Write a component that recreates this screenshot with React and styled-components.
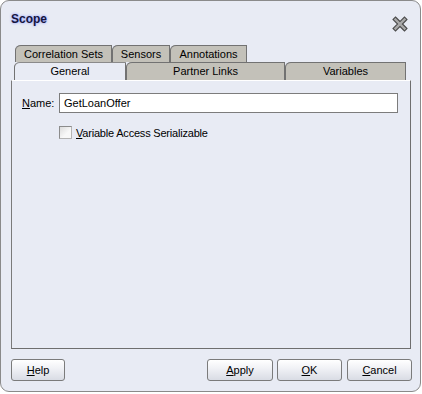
import React from 'react';
import styled, { createGlobalStyle } from 'styled-components';

const GlobalStyle = createGlobalStyle`
  body {
    margin: 0;
    background: #ffffff;
  }
`;

const Window = styled.div`
  box-sizing: border-box;
  width: 421px;
  height: 392px;
  border: 1px solid #8a8a8a;
  border-radius: 9px;
  background: #e8ebf4;
  display: flex;
  flex-direction: column;
  font: 11px 'Liberation Sans', Arial, sans-serif;
  color: #000;
`;

const TitleBar = styled.div`
  box-sizing: border-box;
  height: 44px;
  padding: 11px 12px 0 10px;
  display: flex;
  justify-content: space-between;
  align-items: flex-start;
`;

const Title = styled.div`
  font-size: 12px;
  font-weight: bold;
  line-height: 14px;
  color: #16163c;
  text-shadow: 0 0 3px #9aa6ff, 0 0 2px #b4bcff;
`;

const TabArea = styled.div`
  padding-left: 13px;
  display: flex;
  flex-direction: column;
`;

const TabRow = styled.div`
  display: flex;
  margin-left: ${p => p.$shift || 0}px;
`;

const Tab = styled.div`
  box-sizing: border-box;
  width: ${p => p.$w}px;
  height: ${p => p.$h}px;
  border: 1px solid #727272;
  border-bottom: none;
  border-top-left-radius: 6px 5px;
  background: ${p => (p.$active ? '#e8ebf4' : '#c3c1b9')};
  border-top-color: ${p => (p.$active ? '#8a8a8a' : '#727272')};
  text-align: center;
  line-height: ${p => p.$h - 1}px;
  position: relative;
  z-index: ${p => (p.$active ? 1 : 0)};
  margin-bottom: ${p => (p.$active ? -1 : 0)}px;
  white-space: nowrap;
`;

const Panel = styled.div`
  box-sizing: border-box;
  height: 269px;
  margin: 0 9px 0 10px;
  border-top: 1px solid #ffffff;
  border-left: 1px solid #7a7a7a;
  border-right: 1px solid #6e6e6e;
  border-bottom: 1px solid #6e6e6e;
  padding: 12px 12px 0 10px;
  display: flex;
  flex-direction: column;
`;

const FieldRow = styled.div`
  display: flex;
  align-items: center;
`;

const Label = styled.label`
  width: 37px;
  flex: none;
`;

const TextBox = styled.div`
  box-sizing: border-box;
  flex: 1;
  height: 20px;
  border: 1px solid #7c7c7c;
  background: #ffffff;
  padding-left: 4px;
  line-height: 18px;
`;

const CheckRow = styled.div`
  display: flex;
  align-items: center;
  margin-top: 13px;
  padding-left: 37px;
  gap: 4px;
`;

const CheckText = styled.span`
  letter-spacing: -0.2px;
`;

const CheckBox = styled.span`
  box-sizing: border-box;
  width: 13px;
  height: 13px;
  border: 1px solid #8c8c8c;
  border-right-color: #b4b4b4;
  border-bottom-color: #b4b4b4;
  background: linear-gradient(135deg, #dcdcdc, #f8f8f8 60%);
`;

const Footer = styled.div`
  display: flex;
  align-items: center;
  padding: 10px 8px 0 10px;
  gap: 4px;
`;

const Spacer = styled.div`
  flex: 1;
`;

const Button = styled.button`
  box-sizing: border-box;
  width: ${p => p.$w}px;
  height: 22px;
  margin-left: ${p => p.$ml || 0}px;
  border: 1px solid #7b7b7b;
  border-radius: 3px;
  background: linear-gradient(#ffffff, #f1f2f6 40%, #d9dce4);
  font: 11px 'Liberation Sans', Arial, sans-serif;
  color: #000;
  padding: 0;
`;

const U = styled.span`
  text-decoration: underline;
`;

const CloseIcon = () => (
  <svg width="16" height="16" viewBox="0 0 16 16" style={{ marginTop: 4 }}>
    <path d="M3.5 3.5 L12.5 12.5 M12.5 3.5 L3.5 12.5" stroke="#4a4a4a" strokeWidth="4.6" strokeLinecap="square" />
    <path d="M3.5 3.5 L12.5 12.5 M12.5 3.5 L3.5 12.5" stroke="#a9a9a9" strokeWidth="2.4" strokeLinecap="square" />
  </svg>
);

export default function App() {
  return (
    <>
      <GlobalStyle />
      <Window>
        <TitleBar>
          <Title>Scope</Title>
          <CloseIcon />
        </TitleBar>
        <TabArea>
          <TabRow $shift={1}>
            <Tab $w={97} $h={17}>Correlation Sets</Tab>
            <Tab $w={58} $h={17}>Sensors</Tab>
            <Tab $w={77} $h={17}>Annotations</Tab>
          </TabRow>
          <TabRow>
            <Tab $w={112} $h={18} $active>General</Tab>
            <Tab $w={159} $h={18}>Partner Links</Tab>
            <Tab $w={121} $h={18}>Variables</Tab>
          </TabRow>
        </TabArea>
        <Panel>
          <FieldRow>
            <Label><U>N</U>ame:</Label>
            <TextBox>GetLoanOffer</TextBox>
          </FieldRow>
          <CheckRow>
            <CheckBox />
            <CheckText><U>V</U>ariable Access Serializable</CheckText>
          </CheckRow>
        </Panel>
        <Footer>
          <Button $w={54}><U>H</U>elp</Button>
          <Spacer />
          <Button $w={66}><U>A</U>pply</Button>
          <Button $w={65}><U>O</U>K</Button>
          <Button $w={65} $ml={1}><U>C</U>ancel</Button>
        </Footer>
      </Window>
    </>
  );
}
